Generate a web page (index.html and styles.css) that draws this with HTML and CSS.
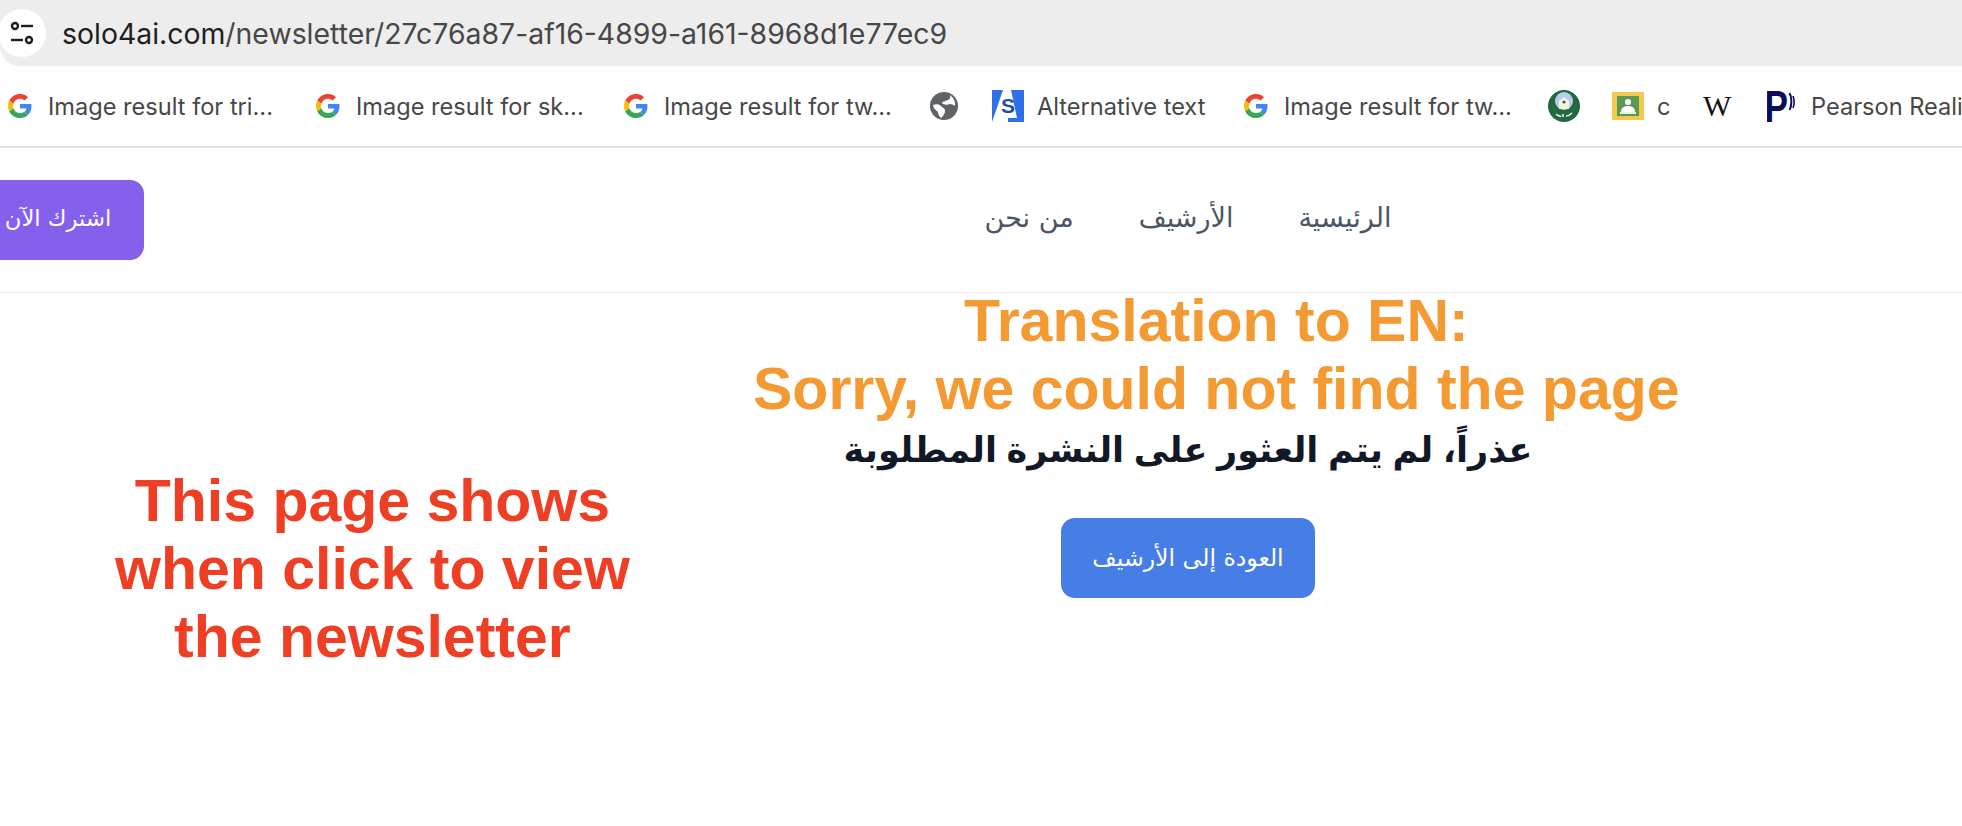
FILE: index.html
```html
<!DOCTYPE html>
<html lang="ar">
<head>
    <meta charset="UTF-8">
    <meta name="viewport" content="width=device-width, initial-scale=1.0">
    <title>solo4ai newsletter</title>
    <link rel="stylesheet" href="styles.css">
</head>
<body>
    <!-- Browser address bar -->
    <div class="address-bar">
        <div class="site-info">
            <svg width="26" height="26" viewBox="0 0 26 26" fill="none" stroke="#1f1f1f" stroke-width="2.4">
                <circle cx="6" cy="6" r="3"/>
                <path d="M12 6h12"/>
                <path d="M2 20h12"/>
                <circle cx="20" cy="20" r="3"/>
            </svg>
        </div>
        <div class="url"><span class="url-host">solo4ai.com</span>/newsletter/27c76a87-af16-4899-a161-8968d1e77ec9</div>
    </div>

    <!-- Bookmarks bar -->
    <div class="bookmarks">
        <a class="bookmark bm-1"><svg class="g-icon" viewBox="0 0 48 48"><use href="#google-g"/></svg><span>Image result for tri...</span></a>
        <a class="bookmark bm-2"><svg class="g-icon" viewBox="0 0 48 48"><use href="#google-g"/></svg><span>Image result for sk...</span></a>
        <a class="bookmark bm-3"><svg class="g-icon" viewBox="0 0 48 48"><use href="#google-g"/></svg><span>Image result for tw...</span></a>
        <a class="bookmark bm-globe">
            <svg width="28" height="28" viewBox="0 0 28 28">
                <circle cx="14" cy="14" r="14" fill="#5f6368"/>
                <path d="M3 13c3-1 6-1 8 1 2 2 4 2 4 5 0 3-2 5-4 7-2-2-3-4-3-6-2-2-5-4-5-7z" fill="#fff"/>
                <path d="M20 3c1 2 0 4-2 5-2 1-5 1-6 3 2 2 5 2 8 1 2 0 4 1 5 2 1-4-2-9-5-11z" fill="#fff"/>
            </svg>
        </a>
        <a class="bookmark bm-alt">
            <svg width="32" height="32" viewBox="0 0 32 32">
                <path d="M0 0h11L0 32z" fill="#2f6fe8"/>
                <path d="M19 0h13v32H16v-4h9z" fill="#2f6fe8"/>
                <text class="logo-s" x="16" y="23" text-anchor="middle">S</text>
            </svg>
            <span>Alternative text</span>
        </a>
        <a class="bookmark bm-4"><svg class="g-icon" viewBox="0 0 48 48"><use href="#google-g"/></svg><span>Image result for tw...</span></a>
        <a class="bookmark bm-seal">
            <svg width="32" height="32" viewBox="0 0 32 32">
                <circle cx="16" cy="16" r="16" fill="#23683f"/>
                <circle cx="16" cy="11" r="9" fill="#b9cdea"/>
                <path d="M11 19v-8l5-4 5 4v8z" fill="#f3f1e4"/>
                <circle cx="16" cy="12" r="1.6" fill="#23683f"/>
                <path d="M8 24c3 3 4 1 5 3m2-3v3m3-1c2 0 4-1 6-3" stroke="#e6efe6" stroke-width="1.6" fill="none"/>
            </svg>
        </a>
        <a class="bookmark bm-class">
            <svg width="32" height="28" viewBox="0 0 32 28">
                <rect width="32" height="28" fill="#f2c94c"/>
                <rect x="5" y="4" width="22" height="20" fill="#5b9a55"/>
                <circle cx="16" cy="10" r="3" fill="#fff"/>
                <path d="M9 20c0-4 3-6 7-6s7 2 7 6z" fill="#fff"/>
                <rect x="8" y="20" width="16" height="2" fill="#e8f1e8"/>
            </svg>
            <span>c</span>
        </a>
        <a class="bookmark bm-wiki"><span class="wiki-w">W</span></a>
        <a class="bookmark bm-pearson">
            <svg width="28" height="32" viewBox="0 0 28 32">
                <text class="logo-p" transform="scale(.8 1)" x="-3" y="32">P</text>
                <path d="M22.500 3c2.500 4 2.500 13 0 17" stroke="#0d0d5c" stroke-width="2" fill="none"/>
                <path d="M26 6c1.500 4 1.500 8 0 12" stroke="#0d0d5c" stroke-width="1.600" fill="none"/>
            </svg>
            <span>Pearson Realize</span>
        </a>
    </div>

    <!-- Site header -->
    <header class="site-header">
        <a class="btn btn-subscribe">اشترك الآن</a>
        <nav class="main-nav">
            <a>الرئيسية</a>
            <a>الأرشيف</a>
            <a>من نحن</a>
        </nav>
    </header>

    <!-- Not found message -->
    <main class="not-found">
        <h2>عذراً، لم يتم العثور على النشرة المطلوبة</h2>
        <a class="btn btn-back">العودة إلى الأرشيف</a>
    </main>

    <!-- Notes written over the screenshot -->
    <div class="note note-orange">Translation to EN:<br>Sorry, we could not find the page</div>
    <div class="note note-red">This page shows<br>when click to view<br>the newsletter</div>

    <svg class="svg-defs" width="0" height="0">
        <defs>
            <g id="google-g">
                <path fill="#EA4335" d="M24 9.500c3.540 0 6.710 1.220 9.210 3.600l6.850-6.850C35.900 2.380 30.470 0 24 0 14.620 0 6.510 5.380 2.560 13.220l7.980 6.190C12.430 13.720 17.740 9.500 24 9.500z"/>
                <path fill="#4285F4" d="M46.980 24.550c0-1.570-.15-3.090-.38-4.550H24v9.020h12.940c-.58 2.960-2.260 5.480-4.780 7.180l7.730 6c4.510-4.180 7.090-10.360 7.090-17.650z"/>
                <path fill="#FBBC05" d="M10.530 28.590c-.48-1.450-.76-2.990-.76-4.590s.27-3.140.76-4.590l-7.980-6.190C.92 16.460 0 20.120 0 24c0 3.880.92 7.540 2.560 10.780l7.970-6.190z"/>
                <path fill="#34A853" d="M24 48c6.480 0 11.930-2.130 15.890-5.810l-7.730-6c-2.150 1.450-4.920 2.300-8.160 2.300-6.260 0-11.570-4.220-13.470-9.910l-7.980 6.190C6.510 42.620 14.620 48 24 48z"/>
            </g>
        </defs>
    </svg>
</body>
</html>
```

FILE: styles.css
```css
html, body {
    margin: 0;
    padding: 0;
    height: 826px;
    overflow: hidden;
    background-color: #fff;
}

body {
    position: relative;
    font-family: "Inter", "DejaVu Sans", sans-serif;
    color: #333;
}

a {
    text-decoration: none;
}

.svg-defs {
    position: absolute;
}

/* Address bar */
.address-bar {
    display: flex;
    align-items: center;
    height: 66px;
    background-color: #eeedee;
    border-bottom-left-radius: 20px;
}

.site-info {
    display: flex;
    align-items: center;
    justify-content: center;
    width: 48px;
    height: 48px;
    margin-left: -2px;
    border-radius: 50%;
    background-color: #fff;
    flex-shrink: 0;
}

.url {
    margin-left: 16px;
    font-size: 28.400px;
    color: #474747;
    white-space: nowrap;
}

.url-host {
    color: #1f1f1f;
}

/* Bookmarks */
.bookmarks {
    display: flex;
    align-items: center;
    height: 80px;
    padding-left: 8px;
    border-bottom: 2px solid #e0e0e0;
    white-space: nowrap;
    overflow: hidden;
}

.bookmark {
    display: flex;
    align-items: center;
    gap: 16px;
    flex-shrink: 0;
    font-size: 23.600px;
    color: #474747;
}

.g-icon {
    width: 24px;
    height: 24px;
}

.bm-1, .bm-2 { width: 308px; }
.bm-3 { width: 306px; }
.bm-globe { width: 62px; }
.bm-alt { width: 252px; gap: 13px; }
.bm-4 { width: 304px; }
.bm-seal { width: 64px; }
.bm-class { width: 91px; gap: 13px; }
.bm-wiki { width: 64px; }

.wiki-w {
    font-family: "Liberation Serif", serif;
    font-size: 30px;
    color: #111;
}

.logo-s {
    font-family: "Liberation Sans", sans-serif;
    font-weight: bold;
    font-size: 21px;
    fill: #1d4fa8;
}

.logo-p {
    font-family: "Liberation Sans", sans-serif;
    font-weight: bold;
    font-size: 44px;
    fill: #0d0d5c;
}

/* Site header */
.site-header {
    position: relative;
    display: flex;
    justify-content: center;
    align-items: center;
    width: 2432px;
    height: 144px;
    margin-left: -28px;
    border-bottom: 1px solid #eeeef0;
    font-family: "DejaVu Sans", sans-serif;
}

.btn {
    display: flex;
    align-items: center;
    justify-content: center;
    height: 80px;
    border-radius: 14px;
    color: #fff;
    font-family: "DejaVu Sans", sans-serif;
}

.btn-subscribe {
    position: absolute;
    left: 0;
    top: 32px;
    width: 172px;
    height: 76px;
    padding-bottom: 4px;
    background-color: #8560ec;
    font-size: 22.700px;
}

.main-nav {
    display: flex;
    flex-direction: row-reverse;
    gap: 65px;
    padding-bottom: 6px;
}

.main-nav a {
    font-size: 27px;
    color: #4b5563;
}

/* Not found message */
.not-found {
    display: flex;
    flex-direction: column;
    align-items: center;
    width: 2376px;
    padding-top: 127px;
    font-family: "DejaVu Sans", sans-serif;
}

.not-found h2 {
    margin: 0 0 38px;
    font-size: 35px;
    word-spacing: -2.500px;
    line-height: 60px;
    color: #111827;
}

.btn-back {
    width: 254px;
    background-color: #477ee6;
    font-size: 23.600px;
}

/* Notes over the page */
.note {
    position: absolute;
    font-family: "Liberation Sans", sans-serif;
    font-weight: bold;
    font-size: 59px;
    line-height: 68px;
    text-align: center;
    white-space: nowrap;
}

.note-orange {
    left: 753px;
    top: 287px;
    color: #f49a33;
}

.note-red {
    left: 115px;
    top: 467px;
    color: #ee3e24;
}
```
